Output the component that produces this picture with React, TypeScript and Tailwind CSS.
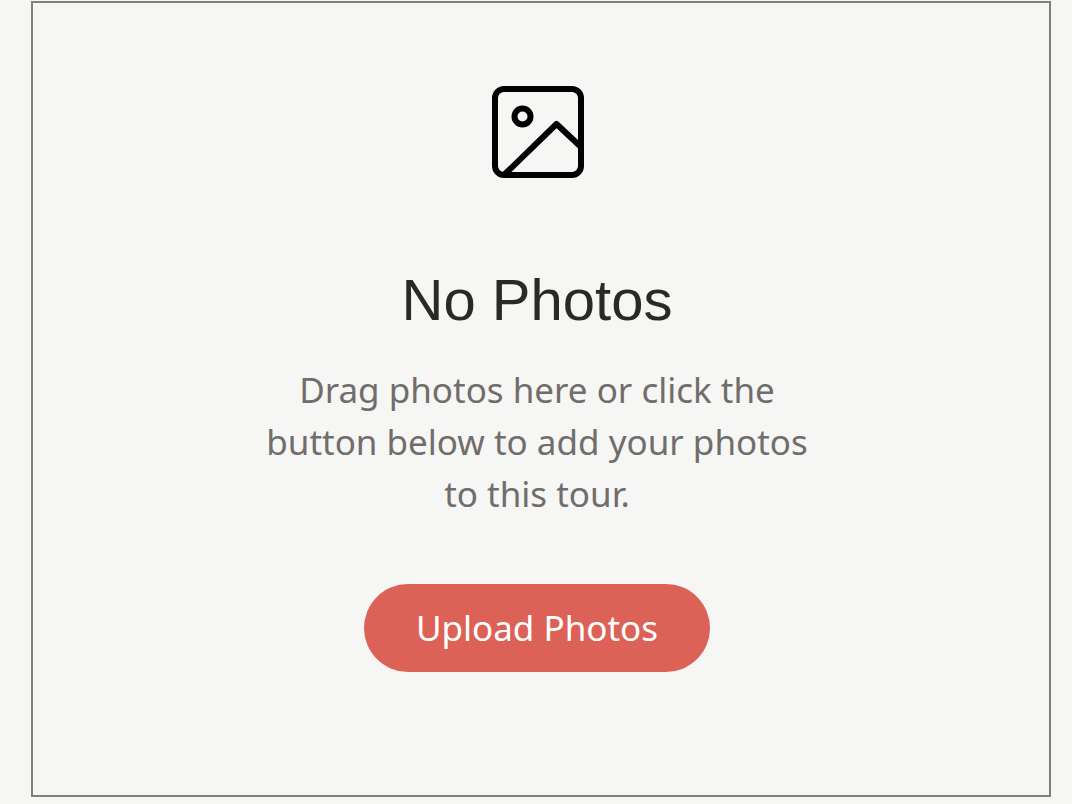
export default function App() {
  return (
    <div className="min-h-screen bg-[#f6f6f4] pt-px pr-[21px] pb-[7px] pl-[31px] font-['Noto_Sans',sans-serif]">
      <main className="flex min-h-[calc(100vh-8px)] flex-col items-center border-2 border-[#7f7f7e] pt-[81px] pr-8 pl-6 text-center">
        <svg className="size-24" viewBox="0 0 96 96" fill="none" stroke="#000000" strokeWidth="6" aria-hidden="true">
          <rect x="6" y="5" width="86" height="86" rx="9" />
          <circle cx="33.5" cy="32.5" r="8" />
          <path d="M15 91 67.5 40 92 63" strokeLinejoin="round" />
        </svg>
        <h1 className="mt-20 font-['Liberation_Sans',sans-serif] text-[58px] leading-[80px] text-[#292928]">No Photos</h1>
        <p className="mt-6 max-w-[560px] text-[35px] leading-[52px] text-[#706d6b]">
          Drag photos here or click the button below to add your photos to this tour.
        </p>
        <button type="button" className="mt-16 h-[88px] rounded-full bg-[#dc6258] px-[52px] text-[35px] text-white">
          Upload Photos
        </button>
      </main>
    </div>
  );
}
